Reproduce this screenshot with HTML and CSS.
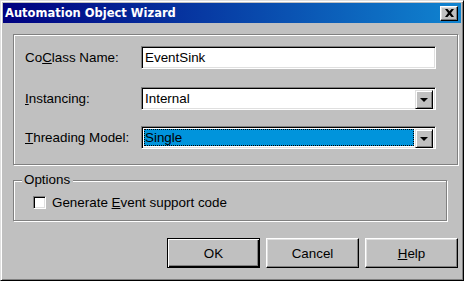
FILE: index.html
```html
<!DOCTYPE html>
<html lang="en">
<head>
    <meta charset="UTF-8">
    <title>Automation Object Wizard</title>
    <link rel="stylesheet" href="styles.css">
</head>
<body>
    <div class="window">
        <div class="titlebar">
            <span class="title">Automation Object Wizard</span>
            <button class="close-btn" aria-label="Close">
                <svg width="9" height="8" viewBox="0 0 9 8">
                    <path d="M0 0h2.5l2 2.2 2-2.2H9L6 4l3 4H6.5l-2-2.2-2 2.2H0l3-4z" fill="#000"/>
                </svg>
            </button>
        </div>
        <div class="content">
            <div class="group main-group">
                <div class="row">
                    <label class="field-label">Co<u>C</u>lass Name:</label>
                    <div class="field">EventSink</div>
                </div>
                <div class="row">
                    <label class="field-label"><u>I</u>nstancing:</label>
                    <div class="field combo">
                        <span class="combo-text">Internal</span>
                        <span class="drop-btn"><span class="arrow"></span></span>
                    </div>
                </div>
                <div class="row">
                    <label class="field-label"><u>T</u>hreading Model:</label>
                    <div class="field combo">
                        <span class="combo-text selected">Single</span>
                        <span class="drop-btn"><span class="arrow"></span></span>
                    </div>
                </div>
            </div>
            <div class="group options-group">
                <span class="legend">Options</span>
                <label class="check-row">
                    <span class="checkbox"></span>
                    <span>Generate <u>E</u>vent support code</span>
                </label>
            </div>
            <div class="buttons">
                <button class="btn default">OK</button>
                <button class="btn">Cancel</button>
                <button class="btn"><u>H</u>elp</button>
            </div>
        </div>
    </div>
</body>
</html>
```

FILE: styles.css
```css
html, body {
    margin: 0;
    padding: 0;
    background-color: #c0c0c0;
}
body {
    font-family: "Liberation Sans", Arial, sans-serif;
    font-size: 13.4px;
    color: #000;
}
.window {
    width: 464px;
    height: 281px;
    box-sizing: border-box;
    background-color: #c0c0c0;
    border: 1px solid;
    border-color: #dfdfdf #000 #000 #dfdfdf;
    box-shadow: inset 1px 1px 0 #fff, inset -1px -1px 0 #808080;
    padding: 2px;
}
.titlebar {
    height: 20px;
    display: flex;
    align-items: center;
    justify-content: space-between;
    padding: 0 3px 0 2px;
    background: linear-gradient(to right, #000080, #1084d0);
}
.title {
    color: #fff;
    font-family: "DejaVu Sans", Verdana, sans-serif;
    font-weight: bold;
    font-size: 11.5px;
}
.close-btn {
    width: 18px;
    height: 15px;
    padding: 0;
    display: flex;
    align-items: center;
    justify-content: center;
    background-color: #c0c0c0;
    border: 1px solid;
    border-color: #fff #000 #000 #fff;
    box-shadow: inset -1px -1px 0 #808080, inset 1px 1px 0 #dfdfdf;
}
.content {
    padding: 11px 0 0 10px;
}
.group {
    border: 1px solid #808080;
    box-shadow: inset 1px 1px 0 #fff, 1px 1px 0 #fff;
    width: 432px;
}
.main-group {
    padding: 11px 0 0 11px;
    box-sizing: content-box;
    height: 118px;
}
.row {
    display: flex;
    align-items: center;
    margin-bottom: 18px;
}
.row + .row + .row {
    margin-top: -2px;
}
.field-label {
    width: 116px;
}
.field {
    width: 295px;
    height: 23px;
    box-sizing: border-box;
    background-color: #fff;
    border: 1px solid;
    border-color: #808080 #fff #fff #808080;
    box-shadow: inset 1px 1px 0 #000, inset -1px -1px 0 #dfdfdf;
    padding: 3px 3px 0 3px;
    line-height: 16px;
}
.combo {
    display: flex;
    padding: 2px 2px 2px 2px;
}
.combo-text {
    flex: 1;
    padding: 1px 1px 0 1px;
    line-height: 16px;
}
.combo-text.selected {
    background-color: #0094dc;
    outline: 1px dotted #000;
    outline-offset: -1px;
    margin-right: 1px;
}
.drop-btn {
    width: 18px;
    height: 19px;
    box-sizing: border-box;
    background-color: #c0c0c0;
    border: 1px solid;
    border-color: #dfdfdf #000 #000 #dfdfdf;
    box-shadow: inset 1px 1px 0 #fff, inset -1px -1px 0 #808080;
    display: flex;
    align-items: center;
    justify-content: center;
}
.arrow {
    width: 0;
    height: 0;
    border-left: 4px solid transparent;
    border-right: 4px solid transparent;
    border-top: 4px solid #000;
    margin-top: 1px;
}
.options-group {
    position: relative;
    margin-top: 15px;
    height: 39px;
}
.legend {
    position: absolute;
    top: -9px;
    left: 8px;
    padding: 0 3px 0 2px;
    background-color: #c0c0c0;
}
.check-row {
    display: flex;
    align-items: center;
    gap: 6px;
    padding: 14px 0 0 19px;
}
.checkbox {
    width: 13px;
    height: 13px;
    box-sizing: border-box;
    background-color: #fff;
    border: 1px solid;
    border-color: #808080 #fff #fff #808080;
    box-shadow: inset 1px 1px 0 #000, inset -1px -1px 0 #dfdfdf;
}
.buttons {
    display: flex;
    justify-content: flex-end;
    gap: 6px;
    margin-top: 17px;
    padding-right: 3px;
}
.btn {
    width: 93px;
    height: 30px;
    box-sizing: border-box;
    font-family: "Liberation Sans", Arial, sans-serif;
    font-size: 13.4px;
    color: #000;
    background-color: #c0c0c0;
    border: 1px solid;
    border-color: #fff #000 #000 #fff;
    box-shadow: inset -1px -1px 0 #808080, inset 1px 1px 0 #dfdfdf;
    padding: 0;
}
.btn.default {
    border: 1px solid #000;
    box-shadow: inset 1px 1px 0 #fff, inset -1px -1px 0 #000, inset -2px -2px 0 #808080;
}
```
